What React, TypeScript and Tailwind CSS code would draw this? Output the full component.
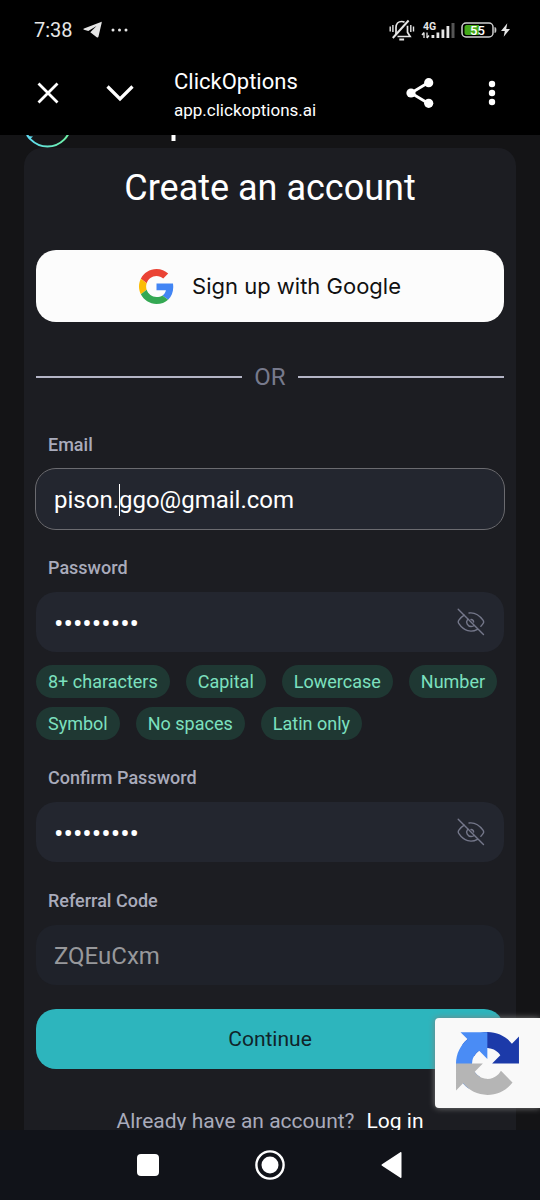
import { useState, type ReactNode } from "react";

const RULES = ["8+ characters", "Capital", "Lowercase", "Number", "Symbol", "No spaces", "Latin only"];

function StatusBar() {
  return (
    <div className="flex h-[60px] items-center justify-between pl-[34px] pr-[30px] text-[#e6e6e6]">
      <div className="flex items-center">
        <span className="w-[38px] text-[20px] leading-6">7:38</span>
        <svg className="ml-[11px] h-[18px] w-[19px]" viewBox="0 0 19 18" fill="currentColor" aria-hidden="true">
          <path d="M18 .9 1 7.600c-.8.4-.8.9 0 1.100l4.300 1.400L13.500 5l-6.200 6.300 6.400 5c.9.6 1.600.3 1.800-.8L18.700 1.700c.1-.7-.1-1-.7-.8z" />
        </svg>
        <svg className="ml-[9px] h-1 w-[18px]" viewBox="0 0 18 4" fill="currentColor" aria-hidden="true">
          <circle cx="2" cy="2" r="1.500" />
          <circle cx="8.500" cy="2" r="1.500" />
          <circle cx="15" cy="2" r="1.500" />
        </svg>
      </div>
      <div className="flex items-center">
        <svg className="h-[22px] w-[26px]" viewBox="0 0 26 22" fill="none" stroke="currentColor" strokeWidth="1.700" aria-hidden="true">
          <path d="M7 15.500V8.600C7 5 9.300 2.500 12.700 2.500c1 0 2 .2 2.800.7M18.500 6.800v6.500l2.600 4.200H8.500" />
          <path d="M3.800 19 19.600 1.500" strokeWidth="2" />
          <path d="M10.300 20.500h4.800" strokeWidth="2" />
          <path d="M1.200 7.500v5M3.900 6v7M21.800 6v7M24.500 7.500v5" strokeWidth="1.400" />
        </svg>
        <svg className="ml-[6px] h-[20px] w-[35px]" viewBox="0 0 35 20" fill="currentColor" aria-hidden="true">
          <text x="2" y="9.500" fontSize="10.500" fontWeight="700" fontFamily="Roboto, sans-serif">4G</text>
          <path d="M3 12.500v5.500M1 15 3 12.500M6 12.500V18M8 15.500 6 18" stroke="currentColor" strokeWidth="1.300" fill="none" />
          <path d="M10.500 15h2.800v3h-2.800zM15.500 12.500h2.800V18h-2.800zM20.500 9.500h2.800V18h-2.800zM25.500 6h2.800v12h-2.800z" />
          <path d="M30.500 3h3v15h-3z" fill="#555" />
        </svg>
        <svg className="ml-[5px] h-[16px] w-[36px]" viewBox="0 0 36 16" aria-hidden="true">
          <rect x="1" y="1" width="31" height="14" rx="4" fill="none" stroke="#cfcfcf" strokeWidth="1.500" />
          <path d="M5.500 3H18v10H5.500C4.500 13 3.500 12 3.500 11V5c0-1 1-2 2-2z" fill="#43a818" />
          <path d="M34 5.500c1.200.6 1.200 4.400 0 5z" fill="#cfcfcf" stroke="#cfcfcf" />
          <text x="16.500" y="12.500" textAnchor="middle" fontSize="13" fontWeight="500" fill="#fff" fontFamily="Roboto, sans-serif">55</text>
        </svg>
        <svg className="ml-1 h-[16px] w-[9px]" viewBox="0 0 10 16" fill="currentColor" aria-hidden="true">
          <path d="M7 .5 0 9h4.200L3 15.500 10 6.800H5.800z" />
        </svg>
      </div>
    </div>
  );
}

function BrowserBar() {
  return (
    <div className="flex h-[75px] items-center pb-[10px] pl-[34px] pr-[34px] text-white">
      <button type="button" aria-label="Close" className="flex w-7 justify-center">
        <svg className="h-[22px] w-[22px]" viewBox="0 0 22 22" fill="none" stroke="currentColor" strokeWidth="2.800">
          <path d="m1.500 1.500 19 19M20.500 1.500l-19 19" />
        </svg>
      </button>
      <button type="button" aria-label="Minimize" className="ml-[44px] flex w-7 justify-center">
        <svg className="h-[18px] w-7" viewBox="0 0 28 18" fill="none" stroke="currentColor" strokeWidth="3.200">
          <path d="m1.500 2.500 12.500 12.500 12.500-12.500" />
        </svg>
      </button>
      <div className="ml-[40px] flex flex-1 flex-col pt-1">
        <span className="text-[22px] leading-7">ClickOptions</span>
        <span className="pt-[2px] text-[17px] leading-6">app.clickoptions.ai</span>
      </div>
      <button type="button" aria-label="Share" className="flex w-7 justify-center">
        <svg className="h-[30px] w-7 shrink-0" viewBox="0 0 28 30" fill="currentColor">
          <path d="M22.500 4.500 5 15l17.500 10.500" fill="none" stroke="currentColor" strokeWidth="2.800" />
          <circle cx="5" cy="15" r="4.600" />
          <circle cx="22.700" cy="4.700" r="4.600" />
          <circle cx="22.700" cy="25.300" r="4.600" />
        </svg>
      </button>
      <button type="button" aria-label="More" className="ml-[44px] flex w-7 justify-center">
        <svg className="h-[26px] w-2" viewBox="0 0 8 26" fill="currentColor">
          <circle cx="4" cy="4" r="3.200" />
          <circle cx="4" cy="13" r="3.200" />
          <circle cx="4" cy="22" r="3.200" />
        </svg>
      </button>
    </div>
  );
}

function SiteHeader() {
  return (
    <div className="flex h-[13px] pl-[23px]">
      <svg className="h-[13px] w-[160px]" viewBox="0 0 160 13" fill="none" aria-hidden="true">
        <defs>
          <linearGradient id="ring" x1="0" x2="1">
            <stop offset="0.1" stopColor="#5fdcf0" />
            <stop offset="0.9" stopColor="#6df0a8" />
          </linearGradient>
        </defs>
        <circle cx="24.500" cy="-12" r="23.500" stroke="url(#ring)" strokeWidth="2" />
        <path d="M3.500 1 10 1.500 6.500 4.500z" fill="#5fdcf0" />
        <path d="M148.500 0h4v6h-4z" fill="#fff" />
      </svg>
    </div>
  );
}

function GoogleLogo() {
  return (
    <svg className="h-[35px] w-[35px]" viewBox="0 0 48 48" aria-hidden="true">
      <path fill="#EA4335" d="M24 9.500c3.540 0 6.710 1.220 9.210 3.600l6.850-6.850C35.900 2.380 30.470 0 24 0 14.620 0 6.510 5.380 2.560 13.220l7.980 6.190C12.430 13.720 17.740 9.500 24 9.500z" />
      <path fill="#4285F4" d="M46.980 24.550c0-1.570-.15-3.090-.38-4.550H24v9.020h12.940c-.58 2.960-2.260 5.480-4.780 7.180l7.730 6c4.510-4.180 7.090-10.360 7.090-17.650z" />
      <path fill="#FBBC05" d="M10.530 28.590c-.48-1.450-.76-2.990-.76-4.590s.27-3.140.76-4.590l-7.980-6.190C.92 16.460 0 20.120 0 24c0 3.880.92 7.540 2.560 10.780l7.970-6.190z" />
      <path fill="#34A853" d="M24 48c6.480 0 11.930-2.130 15.890-5.810l-7.730-6c-2.150 1.450-4.920 2.300-8.160 2.300-6.260 0-11.570-4.220-13.470-9.910l-7.980 6.190C6.510 42.620 14.620 48 24 48z" />
    </svg>
  );
}

function EyeOff() {
  return (
    <svg className="h-7 w-7" viewBox="0 0 28 28" fill="none" stroke="currentColor" strokeWidth="1.400" strokeLinecap="round">
      <path d="M1.200 1.200 26.500 26.500" />
      <path d="M12 5c6-.8 10.500 2.300 14 7.200.8 1.100.8 2.400 0 3.500-.7 1-1.400 1.900-2.100 2.500" />
      <path d="M7.200 7.200C4.900 8.500 3.300 10.300 1.900 12.200c-.8 1.100-.8 2.400 0 3.500C7 23.300 14.200 24.800 20.500 21.300" />
      <path d="M10.700 11.200c-2.400 3.600 0 7.300 3.500 7.300 1.200 0 2.100-.3 3-1" />
      <path d="M14 11.500c1.500.1 2.500 1 2.600 2.500" />
    </svg>
  );
}

function Field({ id, label, children }: { id: string; label: string; children: ReactNode }) {
  return (
    <div className="flex flex-col gap-[10px]">
      <label htmlFor={id} className="pl-3 text-[18px] font-medium leading-[29px] text-[#a9abbb]">
        {label}
      </label>
      <div className="relative flex">{children}</div>
    </div>
  );
}

function PasswordField({ id, label }: { id: string; label: string }) {
  const [shown, setShown] = useState(false);
  return (
    <Field id={id} label={label}>
      <input
        id={id}
        type={shown ? "text" : "password"}
        defaultValue="Passw0rd!"
        className="h-[60px] w-full rounded-[20px] bg-[#23262f] pl-[18px] pr-14 pt-[2px] text-[28px] text-white outline-none"
      />
      <button
        type="button"
        aria-label="Toggle password visibility"
        onClick={() => setShown(!shown)}
        className="absolute inset-y-0 right-[19px] flex items-center text-[#74778a]"
      >
        <EyeOff />
      </button>
    </Field>
  );
}

function RecaptchaBadge() {
  return (
    <div className="absolute bottom-[22px] right-0 flex h-[90px] w-[105px] items-center rounded-l-[4px] bg-[#f9f9f9] pl-[21px] shadow-[0_0_6px_#808080]">
      <svg className="h-[63px] w-[63px]" viewBox="0 0 64 64" aria-label="reCAPTCHA">
        <path fill="#1c3aa9" d="M64 31.955l-.033-1.370V4.687l-7.160 7.160C50.948 4.674 42.033.093 32.050.093c-10.400 0-19.622 4.960-25.458 12.640l11.736 11.860a15.550 15.550 0 0 1 4.754-5.334c2.050-1.600 4.952-2.906 8.968-2.906.485 0 .86.057 1.135.163 4.976.393 9.288 3.140 11.828 7.124l-8.307 8.307L64 31.953" />
        <path fill="#4a8cf5" d="M31.862.094l-1.370.033H4.594l7.160 7.160C4.580 13.147 0 22.060 0 32.046c0 10.400 4.960 19.622 12.640 25.458L24.500 45.768a15.550 15.550 0 0 1-5.334-4.754c-1.600-2.050-2.906-4.952-2.906-8.968 0-.485.057-.86.163-1.135.393-4.976 3.140-9.288 7.124-11.828l8.307 8.307L31.860.095" />
        <path fill="#b5b5b5" d="M.001 32.045l.033 1.370v25.898l7.160-7.160c5.860 7.173 14.774 11.754 24.760 11.754 10.400 0 19.622-4.960 25.458-12.640l-11.736-11.860a15.550 15.550 0 0 1-4.754 5.334c-2.050 1.600-4.952 2.906-8.968 2.906-.485 0-.86-.057-1.135-.163-4.976-.393-9.288-3.140-11.828-7.124l8.307-8.307c-10.522.04-22.400.066-27.295-.005" />
      </svg>
    </div>
  );
}

function SystemNav() {
  return (
    <nav className="flex h-[70px] shrink-0 items-center justify-center gap-[90px] bg-[#111319] text-white">
      <button type="button" aria-label="Recent apps" className="flex w-8 justify-center">
        <span className="h-[22px] w-[22px] rounded-[4px] bg-white" />
      </button>
      <button type="button" aria-label="Home" className="flex w-8 justify-center">
        <svg className="h-[30px] w-[30px]" viewBox="0 0 30 30">
          <circle cx="15" cy="15" r="13.600" fill="none" stroke="currentColor" strokeWidth="2.400" />
          <circle cx="15" cy="15" r="8.500" fill="currentColor" />
        </svg>
      </button>
      <button type="button" aria-label="Back" className="flex w-8 justify-center">
        <svg className="h-[26px] w-[22px]" viewBox="0 0 22 26" fill="currentColor">
          <path d="M20.500.8v24.400c0 .6-.6.900-1.200.5L1 13.800c-.6-.4-.6-1.100 0-1.500L19.300.3c.6-.4 1.200-.1 1.200.5z" />
        </svg>
      </button>
    </nav>
  );
}

export default function App() {
  return (
    <div className="flex h-screen flex-col bg-[#141416] font-['Roboto',sans-serif]">
      <header className="shrink-0 bg-black">
        <StatusBar />
        <BrowserBar />
      </header>
      <main className="relative min-h-0 flex-1 overflow-hidden">
        <SiteHeader />
        <section className="mx-6 rounded-t-[18px] bg-[#1c1d22] px-3 pb-10 pt-4">
          <h1 className="text-center text-[36px] font-normal leading-[48px] text-white">Create an account</h1>
          <button
            type="button"
            className="mt-[38px] flex h-[72px] w-full items-center justify-center gap-[18px] rounded-[20px] bg-[#fcfcfc] font-['Inter',sans-serif] text-[22px] text-[#111]"
          >
            <GoogleLogo />
            Sign up with Google
          </button>
          <div className="mt-[37px] flex items-center gap-3 text-[24px] leading-[36px] text-[#777a8c]">
            <span className="h-[2px] flex-1 bg-[#b4b5c6]" />
            OR
            <span className="h-[2px] flex-1 bg-[#b4b5c6]" />
          </div>
          <form className="mt-[35px] flex flex-col" onSubmit={(e) => e.preventDefault()}>
            <div className="flex flex-col gap-6">
              <Field id="email" label="Email">
                <input
                  id="email"
                  type="email"
                  defaultValue="pison.ggo@gmail.com"
                  className="h-[60px] w-full rounded-[20px] bg-[#23262f] px-[18px] pt-[2px] text-[24px] text-white outline outline-[#6b6b70]"
                />
                <span className="absolute left-[83px] top-[15px] h-8 w-px bg-white" />
              </Field>
              <PasswordField id="password" label="Password" />
            </div>
            <ul className="mt-[13px] flex flex-wrap gap-x-4 gap-y-[9px]">
              {RULES.map((rule) => (
                <li key={rule} className="rounded-full bg-[#1f3833] px-3 py-[3px] text-[18px] leading-[27px] text-[#7ce0bf]">
                  {rule}
                </li>
              ))}
            </ul>
            <div className="mt-[23px] flex flex-col gap-6">
              <PasswordField id="confirm" label="Confirm Password" />
              <Field id="referral" label="Referral Code">
                <input
                  id="referral"
                  type="text"
                  disabled
                  defaultValue="ZQEuCxm"
                  className="h-[60px] w-full rounded-[20px] bg-[#1f222a] px-[18px] pt-[2px] text-[24px] text-[#97989b]"
                />
              </Field>
              <button type="submit" className="h-[60px] rounded-[20px] bg-[#2db5bd] pt-[2px] text-[21px] text-[#10242a]">
                Continue
              </button>
            </div>
          </form>
          <p className="mt-9 flex justify-center gap-3 text-[21px] leading-[32px] text-[#a9abbb]">
            Already have an account?
            <a href="#login" className="text-white">
              Log in
            </a>
          </p>
        </section>
        <RecaptchaBadge />
      </main>
      <SystemNav />
    </div>
  );
}
